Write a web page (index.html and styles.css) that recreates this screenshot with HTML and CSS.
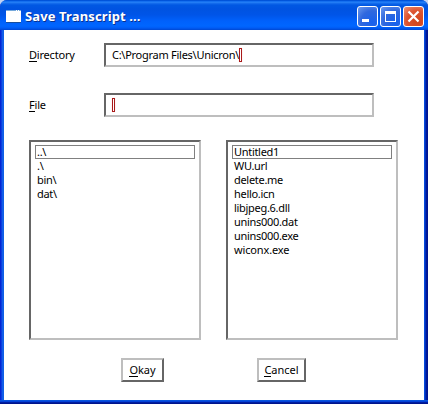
FILE: index.html
```html
<!DOCTYPE html>
<html lang="en">
<head>
<meta charset="utf-8">
<title>Save Transcript ...</title>
<link rel="stylesheet" href="styles.css">
</head>
<body>
<div class="window">
  <header class="titlebar">
    <svg class="app-icon" width="15" height="13" viewBox="0 0 15 13"><path fill="#fff" d="M0 0h15v12H0z"/><path fill="#75a9dc" d="M0 0h15v1H0z"/><path fill="#fff" d="M10 0h1v1h-1zM12 0h1v1h-1z"/><path fill="#174e9e" d="M0 12h15v1H0z"/></svg>
    <h1 class="title">Save Transcript ...</h1>
    <div class="controls">
      <button class="control" aria-label="Minimize"><svg width="19" height="19" viewBox="0 0 19 19"><path fill="#fff" d="M4 12h7v3H4z"/></svg></button>
      <button class="control" aria-label="Maximize"><svg width="19" height="19" viewBox="0 0 19 19"><path fill="#fff" fill-rule="evenodd" d="M4 4h11v11H4zM5 7v7h9V7z"/></svg></button>
      <button class="control close" aria-label="Close"><svg width="19" height="19" viewBox="0 0 19 19"><path stroke="#fff" stroke-width="2.2" d="M4.5 4.5l10 10M14.5 4.5l-10 10"/></svg></button>
    </div>
  </header>
  <main class="content">
    <div class="row"><span class="label"><u>D</u>irectory</span><div class="field"><span class="path">C:\Program Files\Unicron\</span><i class="caret"></i></div></div>
    <div class="row"><span class="label"><u>F</u>ile</span><div class="field"><i class="caret"></i></div></div>
    <div class="lists">
      <ul class="list"><li class="selected">..\</li><li>.\</li><li>bin\</li><li>dat\</li></ul>
      <ul class="list"><li class="selected">Untitled1</li><li>WU.url</li><li>delete.me</li><li>hello.icn</li><li>libjpeg.6.dll</li><li>unins000.dat</li><li>unins000.exe</li><li class="wide">wiconx.exe</li></ul>
    </div>
    <div class="actions"><button class="button okay"><u>O</u>kay</button><button class="button cancel"><u>C</u>ancel</button></div>
  </main>
</div>
</body>
</html>
```
FILE: styles.css
```css
* { box-sizing: border-box; }
body { margin: 0; background: #c3d3f3; }
.window {
  width: 428px; height: 404px; overflow: hidden;
  border-radius: 7px 7px 0 0;
  background: linear-gradient(90deg, #0019cf 0, #0831d9 1px, #166aee 3px, #0855dd 4px, #0855dd 424px, #0441d8 425px, #001da0 426px, #00138c 428px);
  font: 11px/14px "Noto Sans", sans-serif; color: #000;
  box-shadow: inset 0 -1px #00138c, inset 0 -2px #001ea0, inset 0 -3px #0441d8, inset 0 -4px #0855dd;
}
.titlebar {
  height: 30px; display: flex; align-items: center; padding: 2px 4px 0 6px;
  background: linear-gradient(#0050cf 0, #0058e6 1px, #2a88fa 2px, #1870ef 3px, #0058e3 5px, #0053e1 9px, #0055e8 15px, #0061fc 21px, #0066ff 26px, #005bf5 28px, #0047d1 30px);
}
.title {
  margin: 0 auto 0 4px; color: #fff; font: bold 13px/20px "Noto Sans", sans-serif;
  letter-spacing: .12px; text-shadow: 1px 1px #0a318e; white-space: nowrap;
}
.controls { display: flex; gap: 2px; padding-top: 1px; }
.control {
  width: 21px; height: 21px; padding: 0; border: 1px solid #fff; border-radius: 3px;
  background: radial-gradient(circle at 75% 80%, #1760ed, #3068de 55%, #6c9aef);
}
.control svg { display: block; }
.close { background: radial-gradient(circle at 70% 75%, #d2451b, #dc5431 55%, #ed957a); }
.content { margin: 0 4px; height: 370px; background: #fff; padding: 13px 26px 0 25px; }
.row { display: flex; height: 24px; margin-bottom: 26px; align-items: center; }
.label { width: 75px; letter-spacing: -.2px; }
u { text-decoration: none; display: inline-block; height: 14px; border-bottom: 1px solid #000; }
.field, .list { border: 2px solid; border-color: #666 #bebebe #bebebe #666; background: #fff; }
.field { width: 270px; height: 24px; display: flex; align-items: center; padding-left: 6px; }
.path { white-space: pre; width: 127px; letter-spacing: -.27px; }
.caret { width: 3px; height: 14px; border: 1px solid #a91a1a; box-shadow: 0 0 1px #ffb0b0; }
.lists { display: flex; gap: 25px; margin-top: -3px; }
.list { width: 172px; height: 200px; margin: 0; padding: 3px 4px; list-style: none; letter-spacing: -.3px; }
.list li { height: 14px; line-height: 14px; padding-left: 2px; }
.list .wide { letter-spacing: -.15px; }
.list .selected { box-shadow: inset 0 0 0 1px #808080; }
.actions { display: flex; gap: 93px; margin: 18px 0 0 92px; }
.button {
  height: 24px; border: 2px solid; border-color: #bebebe #666 #666 #bebebe;
  background: #fff; padding: 0; font: 11px/14px "Noto Sans", sans-serif; color: #000; white-space: nowrap;
}
.okay { width: 43px; }
.cancel { width: 49px; }
```
